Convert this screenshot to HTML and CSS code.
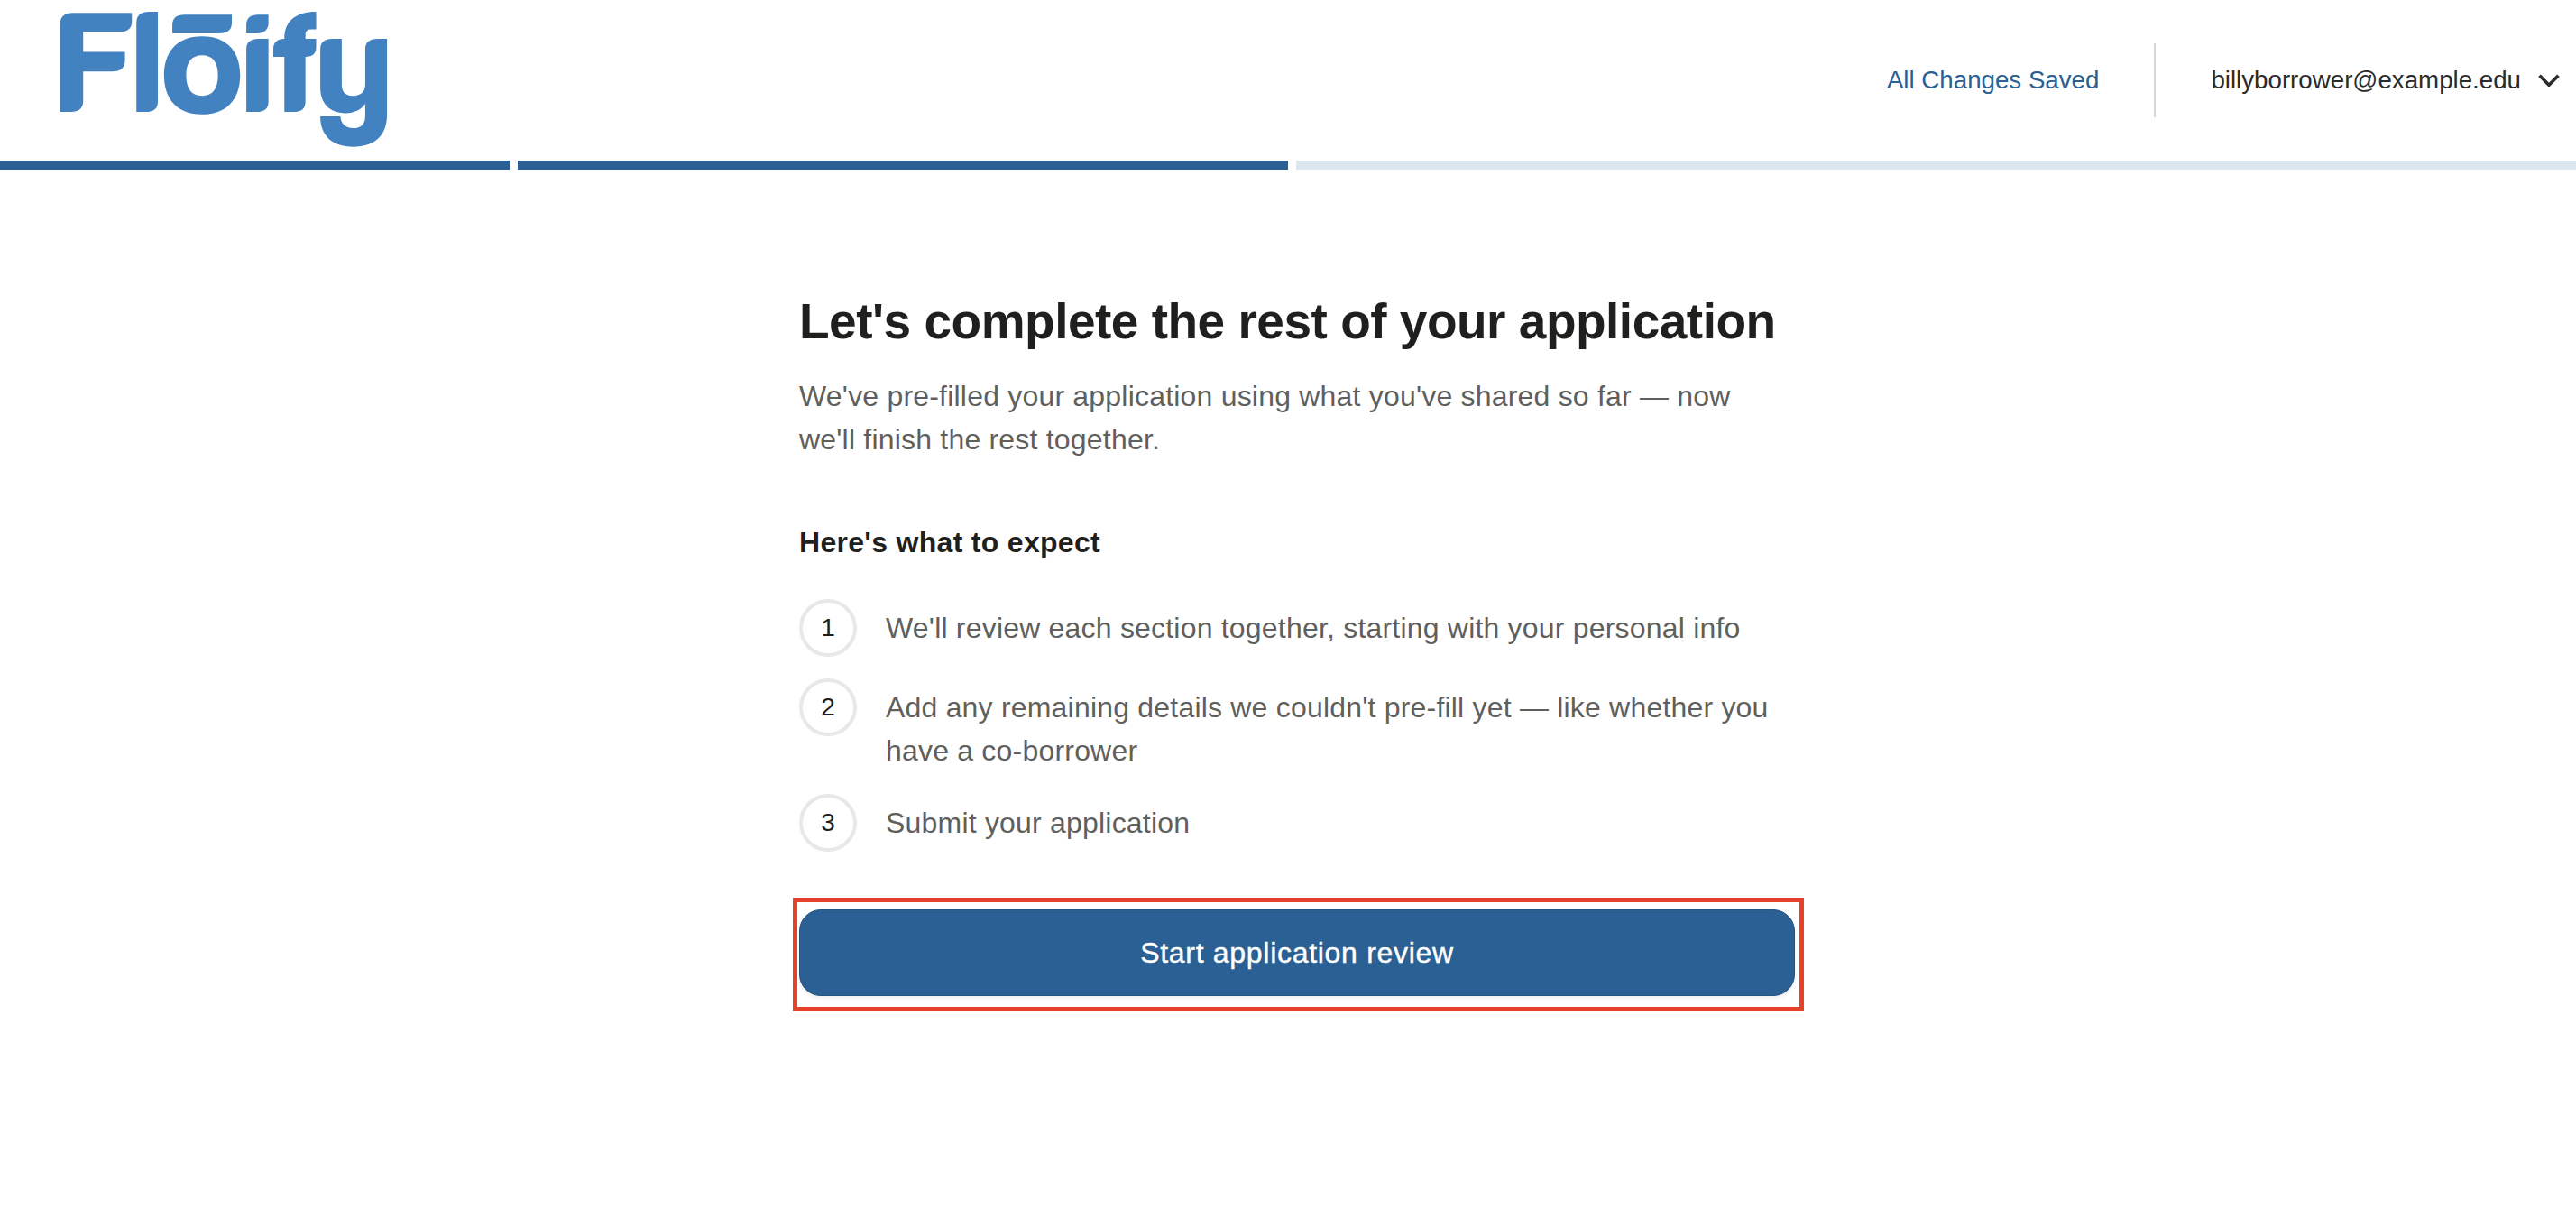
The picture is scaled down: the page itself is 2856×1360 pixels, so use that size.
FILE: index.html
```html
<!doctype html>
<html lang="en">
    <head>
        <meta charset="UTF-8" />
        <meta name="viewport" content="width=device-width, initial-scale=1.0" />
        <title>Floify - Application</title>
        <link rel="stylesheet" href="styles.css">
    </head>

    <body>
        <header class="topbar">
            <svg class="logo" viewBox="170 35 955 457" preserveAspectRatio="none" role="img" aria-label="Floify">
                <path d="M174 372V80Q174 42 212 42H382V70Q382 105 345 105H241V172H362V200Q362 237 325 237H241V335Q241 372 205 372Z" />
                <path d="M395 372V75Q395 38 432 38H457V338Q457 372 422 372Z" />
                <path d="M499 110V82Q499 48 535 48H671V75Q671 110 635 110Z" />
                <path fill-rule="evenodd" d="M585 120C660 120 695 175 695 250C695 325 660 380 585 380C510 380 475 325 475 250C475 175 510 120 585 120ZM585 183C555 183 539 205 539 250C539 295 555 318 585 318C615 318 631 295 631 250C631 205 615 183 585 183Z" />
                <path d="M713 110V82Q713 48 748 48H777V75Q777 110 742 110Z" />
                <path d="M713 372V163Q713 128 748 128H777V338Q777 372 742 372Z" />
                <path d="M823 372V188H791V163Q791 128 823 128C823 70 855 38 915 38V97H900Q884 97 884 115V128H915V155Q915 188 884 188V338Q884 372 850 372Z" />
                <path d="M927 290V163Q927 128 962 128H989V280Q989 318 1020 318Q1057 318 1057 280V163Q1057 128 1092 128H1120V380C1120 450 1085 488 1022 488C960 488 927 450 927 387H985C987 412 1000 426 1022 426C1045 426 1057 412 1057 385V345C1045 365 1025 376 1000 376C955 376 927 345 927 290Z" />
            </svg>
            <div class="topbar-right">
                <span class="saved">All Changes Saved</span>
                <span class="divider"></span>
                <span class="user">billyborrower@example.edu</span>
                <svg class="chevron" viewBox="0.5 0.5 23 13">
                    <path d="M2 2L12 12L22 2" />
                </svg>
            </div>
        </header>

        <div class="progress">
            <span class="seg seg-1"></span>
            <span class="seg seg-2"></span>
            <span class="seg seg-3"></span>
        </div>

        <main class="content">
            <div class="column">
                <h1>Let's complete the rest of your application</h1>
                <p class="intro">We've pre-filled your application using what you've shared so far — now we'll finish the rest together.</p>
                <h2>Here's what to expect</h2>
                <ol class="steps">
                    <li class="step">
                        <span class="num">1</span>
                        <span class="step-text">We'll review each section together, starting with your personal info</span>
                    </li>
                    <li class="step">
                        <span class="num">2</span>
                        <span class="step-text">Add any remaining details we couldn't pre-fill yet — like whether you have a co-borrower</span>
                    </li>
                    <li class="step">
                        <span class="num">3</span>
                        <span class="step-text">Submit your application</span>
                    </li>
                </ol>
                <div class="cta">
                    <button class="start-btn">Start application review</button>
                    <span class="highlight"></span>
                </div>
            </div>
        </main>
    </body>
</html>
```

FILE: styles.css
```css
body {
    margin: 0;
    font-family: "Liberation Sans", Arial, sans-serif;
    background: white;
    color: #1f1f1d;
}

.topbar {
    display: flex;
    align-items: flex-start;
    justify-content: space-between;
    height: 178px;
    padding: 12px 18px 0 65px;
    box-sizing: border-box;
}

.logo {
    width: 366px;
    height: 152px;
    fill: #4282c0;
}

.topbar-right {
    display: flex;
    align-items: center;
    height: 82px;
    margin-top: 36px;
    font-size: 27.7px;
}

.saved {
    color: #2a6093;
}

.divider {
    width: 2px;
    height: 82px;
    margin: 0 61px;
    background: #d6d6d6;
}

.user {
    color: #2b2b2b;
}

.chevron {
    width: 24px;
    height: 14px;
    margin-left: 19px;
    fill: none;
    stroke: #2b2b2b;
    stroke-width: 3.5;
}

.progress {
    display: flex;
    gap: 9px;
    height: 10px;
}

.seg {
    background: #2a6093;
}

.seg-1 {
    flex: 565;
}

.seg-2 {
    flex: 854;
}

.seg-3 {
    flex: 1419;
    background: #dbe6ee;
}

.content {
    display: flex;
    justify-content: center;
    padding: 0 0 100px 20px;
}

.column {
    width: 1104px;
}

h1 {
    margin: 136px 0 0;
    font-size: 55px;
    line-height: 64px;
    letter-spacing: -0.5px;
    font-weight: bold;
}

.intro {
    margin: 27px 0 0;
    width: 1060px;
    font-size: 32px;
    line-height: 48px;
    letter-spacing: 0.2px;
    color: #5f5f5d;
}

h2 {
    margin: 66px 0 0;
    font-size: 32px;
    line-height: 48px;
    letter-spacing: 0.3px;
    font-weight: bold;
}

.steps {
    display: flex;
    flex-direction: column;
    gap: 24px;
    margin: 39px 0 0;
    padding: 0;
    list-style: none;
}

.step {
    display: flex;
    gap: 32px;
}

.num {
    flex: none;
    display: flex;
    align-items: center;
    justify-content: center;
    width: 64px;
    height: 64px;
    box-sizing: border-box;
    border: solid 4px #e8e8e6;
    border-radius: 50%;
    font-size: 28px;
}

.step-text {
    padding-top: 8px;
    font-size: 32px;
    line-height: 48px;
    letter-spacing: 0.2px;
    color: #5f5f5d;
}

.cta {
    position: relative;
    margin-top: 64px;
}

.start-btn {
    display: block;
    width: 100%;
    height: 96px;
    border: solid 1px #24557f;
    border-radius: 24px;
    background: #2a6093;
    box-shadow: 0 2px 4px rgba(0, 0, 0, 0.08);
    color: white;
    font-family: inherit;
    font-size: 32px;
    letter-spacing: 0.7px;
    -webkit-text-stroke: 0.4px white;
    cursor: pointer;
}

/* red annotation box drawn over the button */
.highlight {
    position: absolute;
    top: -13px;
    left: -7px;
    right: -10px;
    bottom: -17px;
    border: solid 5px #e8412a;
    pointer-events: none;
}
```
